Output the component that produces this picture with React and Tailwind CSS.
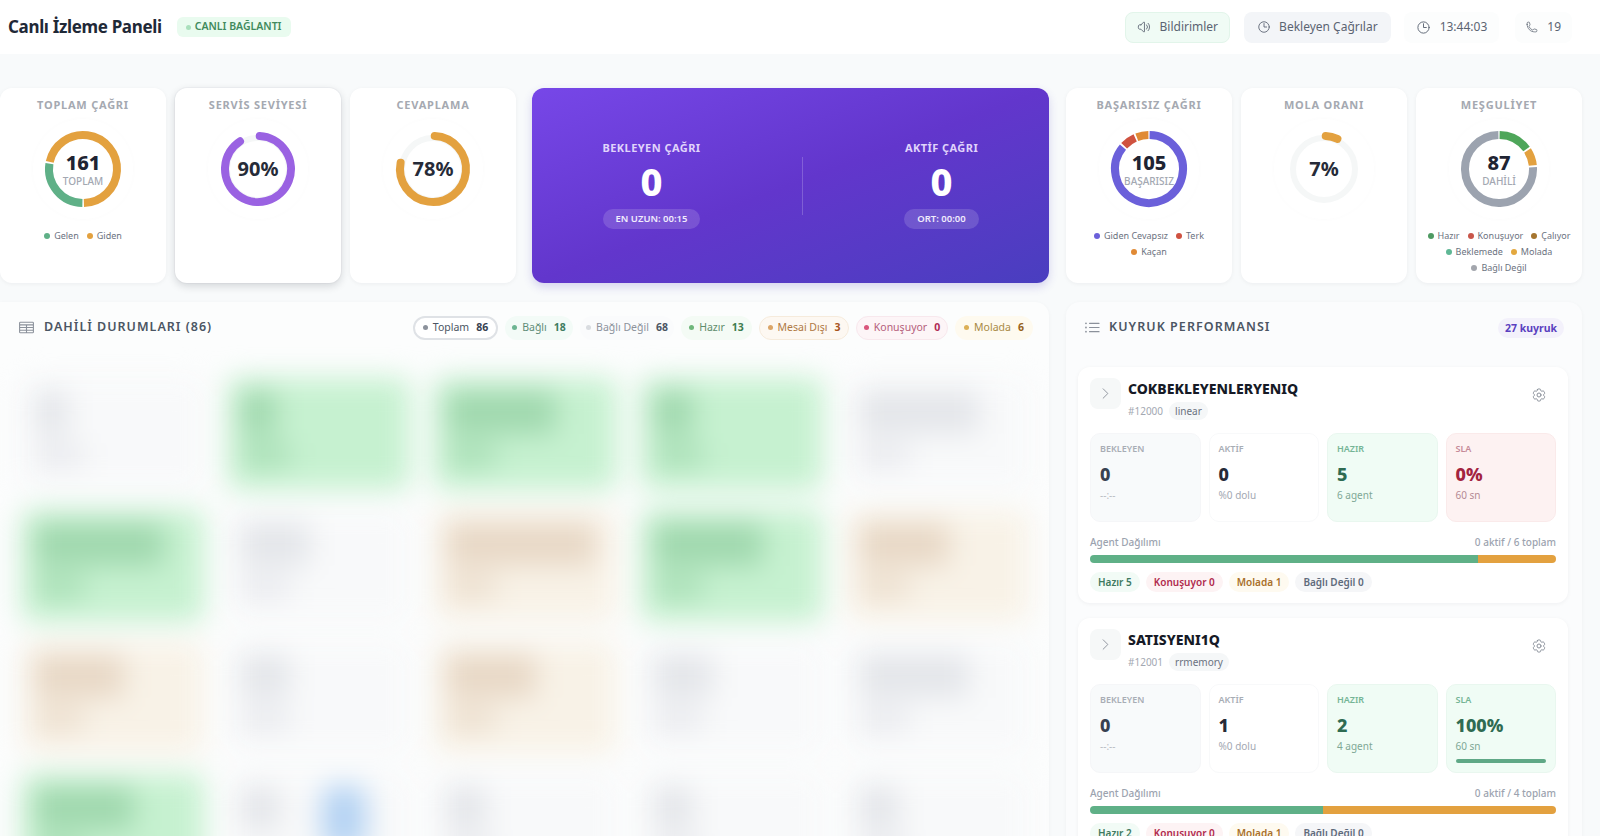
import {
    HiOutlineSpeakerWave,
    HiOutlineClock,
    HiOutlinePhone,
    HiOutlineTableCells,
    HiOutlineListBullet,
    HiOutlineChevronRight,
    HiOutlineCog6Tooth,
} from 'react-icons/hi2';

// angle in degrees, 0 = 12 o'clock, clockwise
const arcPath = (cx, cy, r, start, end) => {
    const toXY = (a) => {
        const rad = ((a - 90) * Math.PI) / 180;
        return [cx + r * Math.cos(rad), cy + r * Math.sin(rad)];
    };
    const [x1, y1] = toXY(start);
    const [x2, y2] = toXY(end);
    const large = end - start > 180 ? 1 : 0;
    return `M ${x1} ${y1} A ${r} ${r} 0 ${large} 1 ${x2} ${y2}`;
};

function Ring({ segments, round, track, value, label }) {
    const r = round ? 33 : 34;
    return (
        <div className="relative w-[100px] h-[100px] rounded-full flex items-center justify-center shadow-[0_0_5px_rgba(17,24,39,0.02)]">
            <svg width="100" height="100" viewBox="0 0 100 100">
                {track && <circle cx="50" cy="50" r="31" fill="none" stroke="#f5f7f7" strokeWidth="6" />}
                {segments.map((s, i) => (
                    <path
                        key={i}
                        d={arcPath(50, 50, r, s.from, s.to)}
                        fill="none"
                        stroke={s.color}
                        strokeWidth="8"
                        strokeLinecap={round ? 'round' : 'butt'}
                    />
                ))}
            </svg>
            <div className="absolute inset-0 flex flex-col items-center justify-center">
                {label ? (
                    <>
                        <span className="text-[20px] leading-[24px] font-extrabold text-[#1f2433]">{value}</span>
                        <span className="text-[10px] leading-[14px] font-medium text-[#a3a8b2] -mt-[1px]">{label}</span>
                    </>
                ) : (
                    <span className="text-[20px] font-bold text-[#262b38]">{value}</span>
                )}
            </div>
        </div>
    );
}

function Legend({ items }) {
    return (
        <div className="flex flex-wrap justify-center gap-x-[8px] px-[10px] mt-[9px]">
            {items.map((it) => (
                <span key={it.name} className="flex items-center gap-[4px] text-[9px] leading-[16px] text-[#6b7280]">
                    <span className="w-[6px] h-[6px] rounded-full" style={{ background: it.color }} />
                    {it.name}
                </span>
            ))}
        </div>
    );
}

function GaugeCard({ title, active, children }) {
    return (
        <div className={`w-[166px] h-[195px] shrink-0 bg-white rounded-[12px] flex flex-col items-center pt-[9px] ${active ? 'shadow-[0_3px_8px_rgba(17,24,39,0.16),0_0_0_1px_#f1f3f5]' : 'shadow-[0_1px_4px_rgba(17,24,39,0.05)]'}`}>
            <div className="text-[11px] leading-[16px] font-bold tracking-[0.07em] text-[#a5a9b1]">{title}</div>
            <div className="flex flex-col items-center w-full mt-[6px]">{children}</div>
        </div>
    );
}

const statusChips = [
    { name: 'Toplam', n: 86, dot: '#8c929c', text: '#4b5563', num: '#374151', cls: 'bg-white border-2 border-[#dfe2e6] w-[85px]' },
    { name: 'Bağlı', n: 18, dot: '#6db592', text: '#5f8d78', num: '#3f7d62', cls: 'bg-[#f3fbf7] w-[68px]' },
    { name: 'Bağlı Değil', n: 68, dot: '#d9dce0', text: '#8d939c', num: '#4b5563', cls: 'bg-[#fafbfc] w-[94px]' },
    { name: 'Hazır', n: 13, dot: '#6fb77b', text: '#5f8d6c', num: '#3e7d4e', cls: 'bg-[#f4fbf5] w-[71px]' },
    { name: 'Mesai Dışı', n: 3, dot: '#dba568', text: '#b07a45', num: '#a8541c', cls: 'bg-[#fdf8f2] border border-[#f6ebdc] w-[90px]' },
    { name: 'Konuşuyor', n: 0, dot: '#d9567c', text: '#b5607c', num: '#b02a55', cls: 'bg-[#fdf5f7] border border-[#f8e8ed] w-[92px]' },
    { name: 'Molada', n: 6, dot: '#dcb057', text: '#a98a45', num: '#96621c', cls: 'bg-[#fefaef] w-[78px]' },
];

// blurred extension cards behind the frosted overlay
const cellColors = {
    grey: { bg: 'bg-[#f8f9fa]', blob: 'bg-[#e4e6ea]' },
    green: { bg: 'bg-[#c6f1d0]', blob: 'bg-[#a0d8ae]' },
    orange: { bg: 'bg-[#f8f2e7]', blob: 'bg-[#e8d8c6]' },
};

const cells = [
    { kind: 'grey', w: 'w-[34px]' }, { kind: 'green', w: 'w-[36px]' }, { kind: 'green', w: 'w-[110px]' }, { kind: 'green', w: 'w-[40px]' }, { kind: 'grey', w: 'w-[120px]' },
    { kind: 'green', w: 'w-[130px]' }, { kind: 'grey', w: 'w-[70px]' }, { kind: 'orange', w: 'w-[150px]' }, { kind: 'green', w: 'w-[110px]' }, { kind: 'orange', w: 'w-[90px]' },
    { kind: 'orange', w: 'w-[90px]' }, { kind: 'grey', w: 'w-[50px]' }, { kind: 'orange', w: 'w-[90px]' }, { kind: 'grey', w: 'w-[60px]' }, { kind: 'grey', w: 'w-[110px]' },
    { kind: 'green', w: 'w-[100px]' }, { kind: 'grey', w: 'w-[40px]', blue: true }, { kind: 'grey', w: 'w-[40px]' }, { kind: 'grey', w: 'w-[40px]' }, { kind: 'grey', w: 'w-[40px]' },
];

function BlurCell({ cell }) {
    const c = cellColors[cell.kind];
    return (
        <div className={`h-[112px] rounded-lg p-[12px] ${c.bg}`}>
            <div className="flex justify-between">
                <div className={`h-[44px] rounded ${c.blob} ${cell.w}`} />
                {cell.blue && <div className="w-[44px] h-[64px] rounded-lg bg-[#b3d2f3] mr-[32px]" />}
            </div>
            <div className={`h-[26px] w-[50px] mt-[8px] rounded ${c.blob} opacity-70`} />
        </div>
    );
}

function Mini({ label, value, sub, cls, labelCls, valueCls, subCls, children }) {
    return (
        <div className={`h-[89px] rounded-[10px] border px-[9px] pt-[8px] ${cls}`}>
            <div className={`text-[9px] leading-[14px] font-semibold ${labelCls}`}>{label}</div>
            <div className={`text-[18px] leading-[24px] font-extrabold mt-[6px] ${valueCls}`}>{value}</div>
            <div className={`text-[10px] leading-[14px] mt-[2px] ${subCls}`}>{sub}</div>
            {children}
        </div>
    );
}

function QueueCard({ name, id, strategy, aktif, hazir, agents, sla, good, split, counts }) {
    return (
        <div className="h-[236px] shrink-0 bg-white rounded-[12px] shadow-[0_1px_4px_rgba(17,24,39,0.05)] px-[12px] pt-[11px] overflow-hidden">
            <div className="flex items-start h-[44px]">
                <div className="w-[31px] h-[31px] rounded-lg bg-[#f6f8f8] flex items-center justify-center shrink-0">
                    <HiOutlineChevronRight size={15} className="text-[#8b919b]" />
                </div>
                <div className="ml-[7px] flex-1">
                    <div className="text-[14px] leading-[20px] font-extrabold text-[#161a26] mt-[1px]">{name}</div>
                    <div className="flex items-center gap-[6px] mt-[3px]">
                        <span className="text-[10px] text-[#a3a8b2]">{id}</span>
                        <span className="text-[10px] leading-[18px] px-[6px] rounded-full bg-[#f5f7f8] text-[#6b7280]">{strategy}</span>
                    </div>
                </div>
                <HiOutlineCog6Tooth size={16} className="text-[#8b919b] mt-[9px] mr-[9px]" />
            </div>
            <div className="grid grid-cols-4 gap-[8px] mt-[11px]">
                <Mini label="BEKLEYEN" value="0" sub="--:--" cls="bg-[#f8fafb] border-[#f5f6f8]" labelCls="text-[#a8adb5]" valueCls="text-[#374151]" subCls="text-[#b8bcc3]" />
                <Mini label="AKTİF" value={aktif} sub="%0 dolu" cls="bg-white border-[#f8f9fa]" labelCls="text-[#a8adb5]" valueCls="text-[#262b38]" subCls="text-[#a3a8b2]" />
                <Mini label="HAZIR" value={hazir} sub={`${agents} agent`} cls="bg-[#f0fcf5] border-[#e9f7ef]" labelCls="text-[#75b595]" valueCls="text-[#2f6b52]" subCls="text-[#7fa895]" />
                {good ? (
                    <Mini label="SLA" value={sla} sub="60 sn" cls="bg-[#f0fcf5] border-[#e9f7ef]" labelCls="text-[#75b595]" valueCls="text-[#2f6b52]" subCls="text-[#7fa895]">
                        <div className="h-[4px] rounded-full bg-[#5fa886] mt-[6px]" />
                    </Mini>
                ) : (
                    <Mini label="SLA" value={sla} sub="60 sn" cls="bg-[#fdf2f2] border-[#faeaea]" labelCls="text-[#c58a99]" valueCls="text-[#a3243f]" subCls="text-[#b58a94]" />
                )}
            </div>
            <div className="flex justify-between mt-[13px] text-[10px] leading-[14px] font-medium text-[#9ca3af]">
                <span>Agent Dağılımı</span>
                <span>{aktif === '1' ? '0' : aktif} aktif / {agents} toplam</span>
            </div>
            <div className="flex h-[8px] rounded-full overflow-hidden mt-[6px]">
                <div className="bg-[#5fb087]" style={{ width: `${split}%` }} />
                <div className="flex-1 bg-[#e3a13f]" />
            </div>
            <div className="flex gap-[6px] mt-[9px] text-[10px] leading-[20px] font-semibold">
                <span className="px-[8px] rounded-full bg-[#f2fbf6] text-[#3f7a60]">Hazır {counts[0]}</span>
                <span className="px-[8px] rounded-full bg-[#fdf3f4] text-[#b02a4d]">Konuşuyor 0</span>
                <span className="px-[8px] rounded-full bg-[#fefaf0] text-[#a8702a]">Molada {counts[1]}</span>
                <span className="px-[8px] rounded-full bg-[#f5f6f8] text-[#5f6b7c]">Bağlı Değil 0</span>
            </div>
        </div>
    );
}

export default function App() {
    return (
        <div className="w-full h-[836px] overflow-hidden bg-[#f8fafb] font-['Noto_Sans','Open_Sans',sans-serif]">
            <header className="h-[54px] bg-white flex items-center justify-between pl-[8px] pr-[28px]">
                <div className="flex items-center gap-[15px]">
                    <h1 className="text-[17px] font-bold text-[#1f2937] tracking-[-0.02em]">Canlı İzleme Paneli</h1>
                    <span className="flex items-center gap-[4px] h-[20px] px-[9px] rounded-md bg-[#e9fbef] text-[10.5px] font-semibold text-[#3f8a5c]">
                        <span className="w-[5px] h-[5px] rounded-full bg-[#a9e0bc]" />
                        CANLI BAĞLANTI
                    </span>
                </div>
                <div className="flex items-center text-[12px] text-[#5b6472]">
                    <button className="flex items-center gap-[9px] h-[31px] px-[11px] rounded-lg bg-[#f0fbf5] border border-[#e2f5ea] mr-[14px]">
                        <HiOutlineSpeakerWave size={14} />
                        Bildirimler
                    </button>
                    <button className="flex items-center gap-[8px] h-[31px] px-[13px] rounded-lg bg-[#f3f5f8] mr-[13px]">
                        <HiOutlineClock size={14} />
                        Bekleyen Çağrılar
                    </button>
                    <span className="flex items-center gap-[9px] h-[31px] px-[12px] rounded-lg bg-[#fcfdfd] mr-[16px]">
                        <HiOutlineClock size={15} />
                        13:44:03
                    </span>
                    <span className="flex items-center gap-[9px] h-[31px] px-[11px] rounded-lg bg-[#fcfdfd]">
                        <HiOutlinePhone size={12} />
                        19
                    </span>
                </div>
            </header>

            <main className="pt-[34px] pr-[18px]">
                <div className="flex">
                    <div className="flex gap-[9px]">
                        <GaugeCard title="TOPLAM ÇAĞRI">
                            <Ring value="161" label="TOPLAM" segments={[
                                { from: -78, to: 178.5, color: '#e3a13f' },
                                { from: 181, to: 279, color: '#5fb087' },
                            ]} />
                            <Legend items={[{ name: 'Gelen', color: '#5fb087' }, { name: 'Giden', color: '#e3a13f' }]} />
                        </GaugeCard>
                        <GaugeCard title="SERVİS SEVİYESİ" active>
                            <Ring value="90%" round track segments={[{ from: 3, to: 327, color: '#9a62e2' }]} />
                        </GaugeCard>
                        <GaugeCard title="CEVAPLAMA">
                            <Ring value="78%" round track segments={[{ from: 3, to: 281, color: '#e3a13f' }]} />
                        </GaugeCard>
                    </div>

                    <div className="w-[517px] h-[195px] shrink-0 ml-[16px] mr-[17px] rounded-[12px] bg-linear-to-br from-[#7747e8] via-[#6236cc] to-[#493ebf] shadow-[0_4px_10px_rgba(76,60,190,0.2)] flex items-center justify-between pl-[71px] pr-[71px]">
                        <div className="flex flex-col items-center w-[97px]">
                            <div className="text-[11px] leading-[16px] font-bold tracking-[0.04em] text-[#e0d4fb] whitespace-nowrap -mt-[2px]">BEKLEYEN ÇAĞRI</div>
                            <div className="text-[38px] leading-[46px] font-extrabold text-white mt-[2px]">0</div>
                            <div className="text-[9.5px] leading-[20px] font-semibold px-[13px] rounded-full bg-white/15 text-[#f1ecfd] mt-[5px] whitespace-nowrap">EN UZUN: 00:15</div>
                        </div>
                        <div className="w-px h-[58px] bg-white/20" />
                        <div className="flex flex-col items-center w-[73px]">
                            <div className="text-[11px] leading-[16px] font-bold tracking-[0.04em] text-[#e0d4fb] whitespace-nowrap -mt-[2px]">AKTİF ÇAĞRI</div>
                            <div className="text-[38px] leading-[46px] font-extrabold text-white mt-[2px]">0</div>
                            <div className="text-[9.5px] leading-[20px] font-semibold px-[13px] rounded-full bg-white/15 text-[#f1ecfd] mt-[5px] whitespace-nowrap">ORT: 00:00</div>
                        </div>
                    </div>

                    <div className="flex gap-[9px]">
                        <GaugeCard title="BAŞARISIZ ÇAĞRI">
                            <Ring value="105" label="BAŞARISIZ" segments={[
                                { from: 1, to: 310, color: '#6b60da' },
                                { from: 313, to: 336, color: '#cf5240' },
                                { from: 339, to: 359, color: '#e08a35' },
                            ]} />
                            <Legend items={[
                                { name: 'Giden Cevapsız', color: '#6b60da' },
                                { name: 'Terk', color: '#cf5240' },
                                { name: 'Kaçan', color: '#e08a35' },
                            ]} />
                        </GaugeCard>
                        <GaugeCard title="MOLA ORANI">
                            <Ring value="7%" round track segments={[{ from: 3, to: 24, color: '#e3a13f' }]} />
                        </GaugeCard>
                        <GaugeCard title="MEŞGULİYET">
                            <Ring value="87" label="DAHİLİ" segments={[
                                { from: 1, to: 54, color: '#4ea65a' },
                                { from: 57, to: 84, color: '#e3a13f' },
                                { from: 87, to: 359, color: '#9ca3af' },
                            ]} />
                            <Legend items={[
                                { name: 'Hazır', color: '#4e9a62' },
                                { name: 'Konuşuyor', color: '#c8564a' },
                                { name: 'Çalıyor', color: '#a5752f' },
                                { name: 'Beklemede', color: '#5fb795' },
                                { name: 'Molada', color: '#e3a83f' },
                                { name: 'Bağlı Değil', color: '#a3a6ad' },
                            ]} />
                        </GaugeCard>
                    </div>
                </div>

                <div className="flex gap-[17px] mt-[19px]">
                    <section className="w-[1049px] h-[540px] shrink-0 bg-[#fcfdfd] rounded-tr-[14px] shadow-[0_1px_4px_rgba(17,24,39,0.04)] overflow-hidden">
                        <div className="h-[51px] flex items-center justify-between pl-[18px] pr-[16px]">
                            <div className="flex items-center gap-[9px]">
                                <HiOutlineTableCells size={17} className="text-[#8b919b]" />
                                <span className="text-[12.5px] font-semibold tracking-[0.08em] text-[#4b5563]">DAHİLİ DURUMLARI (86)</span>
                            </div>
                            <div className="flex gap-[7px]">
                                {statusChips.map((c) => (
                                    <span key={c.name} className={`h-[24px] rounded-full flex items-center justify-center gap-[5px] text-[10.5px] ${c.cls}`}>
                                        <span className="w-[5px] h-[5px] rounded-full" style={{ background: c.dot }} />
                                        <span style={{ color: c.text }}>{c.name}</span>
                                        <span className="font-bold ml-[2px]" style={{ color: c.num }}>{c.n}</span>
                                    </span>
                                ))}
                            </div>
                        </div>
                        <div className="grid grid-cols-5 gap-x-[24px] gap-y-[20px] pl-[22px] pr-[20px] pt-[25px] blur-[14px]">
                            {cells.map((cell, i) => (
                                <BlurCell key={i} cell={cell} />
                            ))}
                        </div>
                    </section>

                    <section className="w-[516px] h-[540px] shrink-0 bg-[#fbfcfd] rounded-t-[14px] shadow-[0_1px_4px_rgba(17,24,39,0.04)] overflow-hidden pl-[12px] pr-[14px]">
                        <div className="h-[51px] flex items-center justify-between pl-[5px] pr-[4px]">
                            <div className="flex items-center gap-[7px]">
                                <HiOutlineListBullet size={19} className="text-[#8b919b]" />
                                <span className="text-[12.5px] font-semibold tracking-[0.085em] text-[#4b5563]">KUYRUK PERFORMANSI</span>
                            </div>
                            <span className="text-[10.5px] leading-[20px] font-bold px-[7px] rounded-full bg-[#f3f1fb] text-[#5a3fc0]">27 kuyruk</span>
                        </div>
                        <div className="flex flex-col gap-[15px] mt-[14px]">
                            <QueueCard name="COKBEKLEYENLERYENIQ" id="#12000" strategy="linear" aktif="0" hazir="5" agents="6" sla="0%" split={83.3} counts={[5, 1]} />
                            <QueueCard name="SATISYENI1Q" id="#12001" strategy="rrmemory" aktif="1" hazir="2" agents="4" sla="100%" good split={50} counts={[2, 1]} />
                        </div>
                    </section>
                </div>
            </main>
        </div>
    );
}
